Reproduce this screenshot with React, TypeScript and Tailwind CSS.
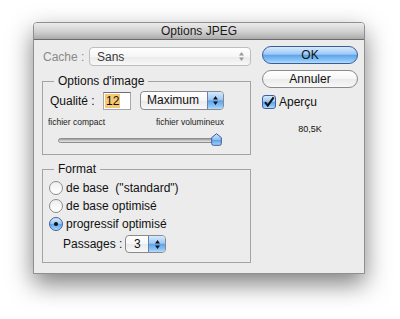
import React from 'react';

function Arrows({ color = '#111' }: { color?: string }) {
  return (
    <svg width="7" height="11" viewBox="0 0 7 11">
      <path d="M3.5 1 L6 4.5 H1 Z M1 6.5 H6 L3.5 10 Z" fill={color} />
    </svg>
  );
}

const blueGloss =
  'bg-[linear-gradient(#d6e9fc,#9cc9f4_45%,#5fa3ec_52%,#8cc6f6_85%,#b6defb)]';
const whiteGloss = 'bg-[linear-gradient(#ffffff,#f6f6f6_50%,#ebebeb_52%,#f8f8f8)]';

function Radio({ checked, label }: { checked?: boolean; label: string }) {
  return (
    <div className="h-[18px] flex items-center gap-[3px]">
      <span
        className={`w-[14px] h-[14px] rounded-full border flex items-center justify-center ${
          checked ? `border-[#3f5f9e] ${blueGloss}` : 'border-[#8c8c8c] bg-[linear-gradient(#f0f0f0,#ffffff)]'
        }`}
      >
        {checked && <span className="w-[4px] h-[4px] rounded-full bg-[#111]" />}
      </span>
      <span className="whitespace-pre">{label}</span>
    </div>
  );
}

export default function App() {
  return (
    <div className="w-[400px] h-[319px] bg-white pl-[33px] pt-[22px] font-['Liberation_Sans',Arial,sans-serif] text-[12px] text-[#111]">
      <div className="w-[332px] h-[252px] flex flex-col bg-[#ececec] border border-[#8f8f8f] rounded-t-[4px] shadow-[0_10px_24px_rgba(0,0,0,0.5)]">
        {/* title bar */}
        <div className="h-[17px] shrink-0 rounded-t-[3px] bg-[linear-gradient(#ebebeb,#d0d0d0_55%,#ababab)] border-b border-[#6b6b6b] flex items-center justify-center leading-none text-[#1a1a1a]">
          Options JPEG
        </div>

        <div className="flex pl-[8px] gap-[11px]">
          {/* left column */}
          <div className="w-[209px] flex flex-col">
            <div className="mt-[7px] h-[19px] flex items-center">
              <span className="w-[47px] pl-[1px] text-[#8a8a8a]">Cache :</span>
              <div className={`flex-1 h-[19px] rounded-[4px] border border-[#bdbdbd] ${whiteGloss} flex items-center pl-[7px] pr-[5px] text-[#3a3a3a]`}>
                <span className="flex-1">Sans</span>
                <Arrows color="#9a9a9a" />
              </div>
            </div>

            <fieldset className="mt-[8px] border border-[#a3a3a3] pb-[8px]">
              <legend className="ml-[11px] px-[4px] leading-[14px]">Options d'image</legend>
              <div className="pt-[3px] pl-[7px] h-[22px] flex items-center">
                <span className="w-[53px]">Qualité :</span>
                <div className="w-[28px] h-[18px] bg-white border border-[#a8a8a8] border-t-[#6f6f6f] flex items-center pl-[1px]">
                  <span className="bg-[#f8c872] h-[14px] leading-[14px] px-[1px]">12</span>
                </div>
                <div className={`ml-[9px] w-[84px] h-[19px] rounded-[4px] border border-[#8a8a8a] ${whiteGloss} flex overflow-hidden`}>
                  <span className="flex-1 pl-[6px] leading-[17px]">Maximum</span>
                  <span className={`w-[16px] border-l border-[#6c7fa8] ${blueGloss} flex items-center justify-center`}>
                    <Arrows />
                  </span>
                </div>
              </div>
              <div className="mt-[7px] ml-[5px] w-[176px] h-[10px] flex justify-between items-center text-[8.5px] leading-[10px] text-[#222]">
                <span>fichier compact</span>
                <span>fichier volumineux</span>
              </div>
              <div className="mt-[6px] ml-[15px] w-[164px] h-[13px] relative">
                <div className="absolute left-0 right-[3px] top-[5px] h-[5px] rounded-full border border-[#8c8c8c] bg-[linear-gradient(#9c9c9c,#cfcfcf_60%,#e6e6e6)]" />
                <svg className="absolute right-0 top-0" width="11" height="13" viewBox="0 0 11 13">
                  <defs>
                    <linearGradient id="thumb" x1="0" y1="0" x2="0" y2="1">
                      <stop offset="0" stopColor="#d2e7fc" />
                      <stop offset="0.5" stopColor="#8fc0f2" />
                      <stop offset="0.55" stopColor="#5ba0ea" />
                      <stop offset="1" stopColor="#a8d6fa" />
                    </linearGradient>
                  </defs>
                  <path
                    d="M5.5 0.7 L10.3 4.6 V10.6 Q10.3 12.3 8.6 12.3 H2.4 Q0.7 12.3 0.7 10.6 V4.6 Z"
                    fill="url(#thumb)"
                    stroke="#3a5c9c"
                    strokeWidth="1"
                  />
                </svg>
              </div>
            </fieldset>

            <fieldset className="mt-[7px] border border-[#a3a3a3] pb-[9px]">
              <legend className="ml-[11px] px-[4px] leading-[14px]">Format</legend>
              <div className="pt-[3px] pl-[6px] flex flex-col">
                <Radio label={'de base  ("standard")'} />
                <Radio label="de base optimisé" />
                <Radio checked label="progressif optimisé" />
              </div>
              <div className="mt-[2px] pl-[20px] h-[18px] flex items-center">
                <span className="w-[62px]">Passages :</span>
                <div className={`w-[41px] h-[18px] rounded-[4px] border border-[#8a8a8a] ${whiteGloss} flex overflow-hidden`}>
                  <span className="flex-1 pl-[8px] leading-[16px]">3</span>
                  <span className={`w-[17px] border-l border-[#6c7fa8] ${blueGloss} flex items-center justify-center`}>
                    <Arrows />
                  </span>
                </div>
              </div>
            </fieldset>
          </div>

          {/* right column */}
          <div className="w-[96px] flex flex-col">
            <div className={`mt-[6px] h-[18px] rounded-full border border-[#3a5c9e] ${blueGloss} flex items-center justify-center`}>
              OK
            </div>
            <div className={`mt-[6px] h-[18px] rounded-full border border-[#8a8a8a] ${whiteGloss} flex items-center justify-center`}>
              Annuler
            </div>
            <div className="mt-[7px] h-[14px] flex items-center gap-[3px]">
              <span className={`w-[14px] h-[14px] rounded-[3px] border border-[#3f5f9e] ${blueGloss} flex items-center justify-center`}>
                <svg width="12" height="12" viewBox="0 0 12 12">
                  <path d="M2 6.2 L4.8 9.6 L10.6 1.4" fill="none" stroke="#111" strokeWidth="2" />
                </svg>
              </span>
              <span>Aperçu</span>
            </div>
            <div className="mt-[15px] text-center text-[9px] leading-[11px]">80,5K</div>
          </div>
        </div>
      </div>
    </div>
  );
}
